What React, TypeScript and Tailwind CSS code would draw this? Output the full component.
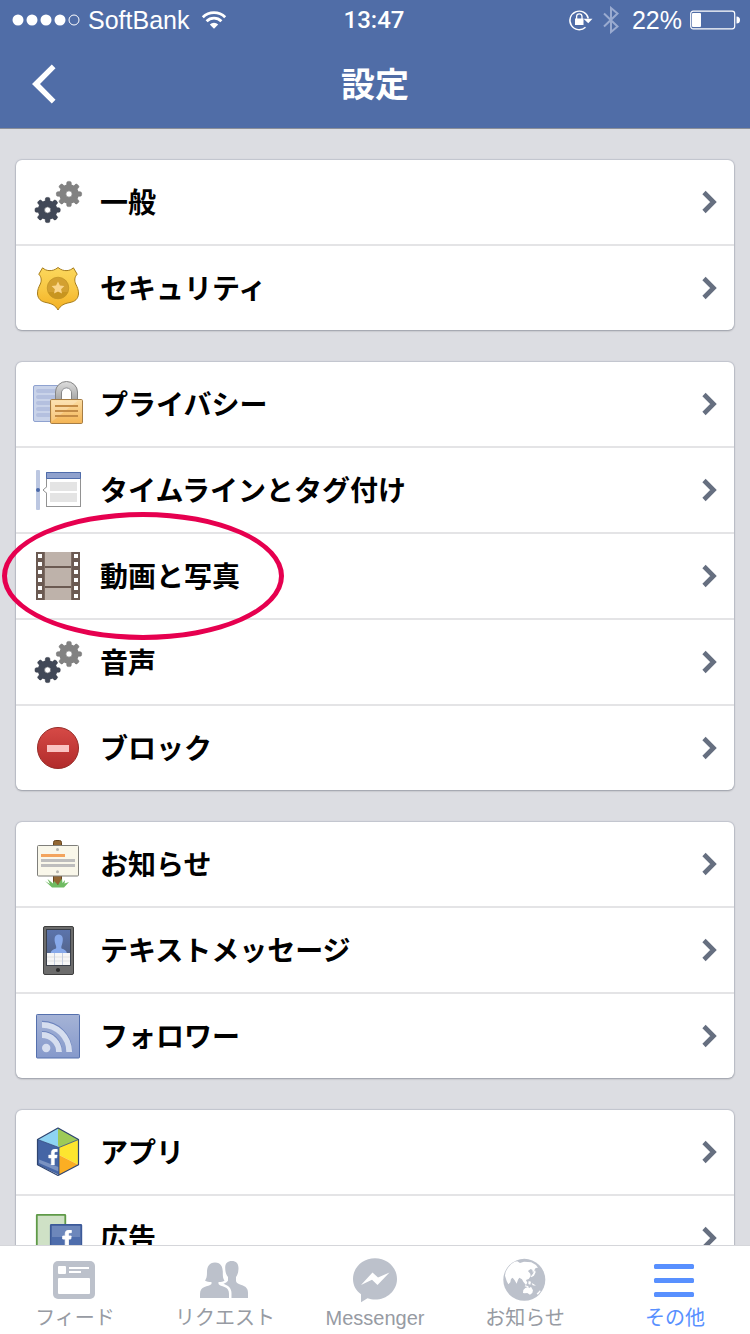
import { FC, ReactNode } from "react";
import { FaFacebookF } from "react-icons/fa";

const Gear: FC<{ x: number; y: number; fill: string; edge: string }> = ({
  x,
  y,
  fill,
  edge,
}) => (
  <g transform={`translate(${x} ${y})`}>
    {[0, 45, 90, 135, 180, 225, 270, 315].map((deg) => (
      <rect
        key={deg}
        x="-2.3"
        y="-12.6"
        width="4.6"
        height="7"
        rx="1.6"
        fill={fill}
        stroke={edge}
        strokeWidth="0.5"
        transform={`rotate(${deg})`}
      />
    ))}
    <circle r="6.5" fill="none" stroke={fill} strokeWidth="6.6" />
    <circle r="3.1" fill="#fff" stroke={edge} strokeWidth="0.6" />
  </g>
);

const GearsIcon = () => (
  <>
    <Gear x={37} y={18} fill="#828282" edge="#6c6c6c" />
    <Gear x={15.6} y={34} fill="#414857" edge="#2e333e" />
  </>
);

const ShieldIcon = () => (
  <>
    <defs>
      <linearGradient id="shieldGold" x1="0" y1="0" x2="0" y2="1">
        <stop offset="0" stopColor="#fbd75c" />
        <stop offset="0.5" stopColor="#f9c844" />
        <stop offset="1" stopColor="#f3b022" />
      </linearGradient>
    </defs>
    <path
      d="M26 5.5C23 8 20 8.8 17 8.6C14.5 8.4 12.5 7.5 10.6 5.8L6.8 12.2C9.5 15 9.8 18.5 8.3 22C6.8 25 5.3 28 5.5 32C6 37 9 39.5 14 40.5C20 41.6 23.5 43.5 26 48C28.5 43.5 32 41.6 38 40.5C43 39.5 46 37 46.500 32C46.700 28 45.200 25 43.700 22C42.200 18.500 42.500 15 45.200 12.200L41.400 5.800C39.500 7.500 37.500 8.400 35 8.600C32 8.800 29 8 26 5.500Z"
      fill="url(#shieldGold)"
      stroke="#a67c1c"
      strokeWidth="1"
    />
    <circle cx="26" cy="26" r="10.800" fill="#d3a030" stroke="#b98d22" strokeWidth="0.6" />
    <path d="M16 30A10.800 10.800 0 0 0 36 30Z" fill="#c8951f" />
    <path
      d="M26 19.500L27.900 23.600L32.400 24.100L29.100 27.200L30 31.600L26 29.400L22 31.600L22.900 27.200L19.600 24.100L24.100 23.600Z"
      fill="#fbd58a"
    />
  </>
);

const PrivacyIcon = () => (
  <>
    <defs>
      <linearGradient id="lockBody" x1="0" y1="0" x2="0" y2="1">
        <stop offset="0" stopColor="#fbdda4" />
        <stop offset="1" stopColor="#f4b453" />
      </linearGradient>
      <linearGradient id="lockRing" x1="0" y1="0" x2="0" y2="1">
        <stop offset="0" stopColor="#dedede" />
        <stop offset="1" stopColor="#a5a5a5" />
      </linearGradient>
    </defs>
    <rect x="1.500" y="7.500" width="34" height="36" rx="1.500" fill="#c9d3e9" stroke="#8fa2d0" />
    {[11, 17, 23, 29, 35].map((y) => (
      <rect key={y} x="4" y={y} width="24" height="4" rx="2" fill="#b4c0df" />
    ))}
    <path
      d="M23.500 22V14A11 10.500 0 0 1 45.500 14V22H39.500V15A5 5 0 0 0 29.500 15V22Z"
      fill="url(#lockRing)"
      stroke="#858585"
    />
    <path d="M30 22V15A4.500 4.500 0 0 1 39 15V22Z" fill="#fff" />
    <rect x="18.500" y="21.500" width="32" height="24" rx="1.200" fill="url(#lockBody)" stroke="#a67d45" />
    <path d="M19.500 44L46 22.500H19.500Z" fill="#fff" opacity="0.2" />
    <path d="M23 28H46M23 33H46M23 38H46" stroke="#c38b45" strokeWidth="1.800" />
  </>
);

const TimelineIcon = () => (
  <>
    <rect x="4" y="6" width="4" height="40" rx="1" fill="#bcc7e1" />
    <circle cx="6" cy="26" r="2" fill="#4a68a8" />
    <rect x="14.500" y="8.500" width="34" height="34" fill="#fff" stroke="#929292" />
    <path d="M15 22.500L11 26L15 29.500" fill="#fff" stroke="#929292" />
    <path d="M14.500 8.500H48.500V14.500H14.500Z" fill="#8fa1cd" stroke="#4f6cab" />
    <rect x="18" y="18" width="27" height="9" fill="#e4e4e4" />
    <rect x="18" y="29" width="27" height="9" fill="#e4e4e4" />
  </>
);

const FilmIcon = () => (
  <>
    <rect x="4" y="2" width="44" height="48" fill="#6b5a52" />
    <rect x="12" y="2" width="28" height="48" fill="#beb2aa" />
    <path d="M12 17H40M12 37H40" stroke="#6b5a52" strokeWidth="2" />
    <path d="M12.500 2V50M39.500 2V50" stroke="#7c6b62" strokeWidth="1" />
    {[4, 12, 20, 28, 36, 44].map((y) => (
      <g key={y} fill="#fff">
        <rect x="6" y={y} width="4" height="4" />
        <rect x="42" y={y} width="4" height="4" />
      </g>
    ))}
  </>
);

const BlockIcon = () => (
  <>
    <defs>
      <linearGradient id="blockRed" x1="0" y1="0" x2="0" y2="1">
        <stop offset="0" stopColor="#d64a46" />
        <stop offset="1" stopColor="#b12b2b" />
      </linearGradient>
    </defs>
    <circle cx="26" cy="26" r="20.500" fill="url(#blockRed)" stroke="#962b27" />
    <rect x="15" y="23" width="22" height="7" fill="#fac3c2" />
  </>
);

const NoticeIcon = () => (
  <>
    <rect x="21.500" y="2.500" width="8" height="44" rx="2" fill="#926733" stroke="#66451f" />
    <path
      d="M20 49.500L13 43L18 46L15.500 41L21 45.500L22 43L26 47L30 40.500L30.500 45L33 42L32.500 45.500L37 44L32 49.500Z"
      fill="#6fbb62"
    />
    <rect x="5.500" y="7.500" width="41" height="30.500" rx="1" fill="#f9f7ea" stroke="#7f7f7b" />
    <circle cx="25.500" cy="11.500" r="1.500" fill="#b5b5b0" />
    <circle cx="25.500" cy="33.800" r="1.500" fill="#b5b5b0" />
    <rect x="9" y="16" width="24" height="3" fill="#f3a45d" />
    <rect x="9" y="21" width="34" height="3" fill="#bdbdbd" />
    <rect x="9" y="26" width="34" height="3" fill="#bdbdbd" />
  </>
);

const PhoneIcon = () => (
  <>
    <defs>
      <linearGradient id="phoneScreen" x1="0" y1="0" x2="0" y2="1">
        <stop offset="0" stopColor="#5b74ac" />
        <stop offset="1" stopColor="#54658c" />
      </linearGradient>
    </defs>
    <rect x="11.500" y="2.500" width="30" height="48" rx="1.500" fill="#6c6c6c" stroke="#3f3f3f" />
    <rect x="14" y="5" width="25" height="37" fill="#3a3f49" />
    <rect x="15" y="6" width="23" height="24" fill="url(#phoneScreen)" />
    <path
      d="M18.500 29.500C19 26.500 21 25.500 24 24.500C24.500 23 24 22 23.500 20.500C21.500 14 23 10.500 26.700 10.500C30.400 10.500 32 14 30 20.500C29.500 22 29 23 29.500 24.500C32.500 25.500 34.500 26.500 35 29.500Z"
      fill="#87a9ea"
    />
    <rect x="15" y="29" width="23" height="12" fill="#f6f6f6" />
    <path d="M15 33H38M15 37H38" stroke="#dedede" strokeWidth="0.800" />
    <path d="M22.500 29V41M30.500 29V41" stroke="#c5cedf" />
    <circle cx="26" cy="46" r="2.100" fill="#2c2c2c" />
  </>
);

const FollowerIcon = () => (
  <>
    <defs>
      <linearGradient id="rssBlue" x1="0" y1="0" x2="0" y2="1">
        <stop offset="0" stopColor="#a5b3d6" />
        <stop offset="1" stopColor="#8599cb" />
      </linearGradient>
    </defs>
    <rect x="4.500" y="4.500" width="43" height="43.500" rx="0.800" fill="url(#rssBlue)" stroke="#5570ad" />
    <path d="M10 14.800A27.200 27.200 0 0 1 37.200 42M10 25A17 17 0 0 1 27 42" fill="none" stroke="#6d84bd" strokeWidth="6" transform="translate(0 -1)" />
    <path d="M10 14.800A27.200 27.200 0 0 1 37.200 42M10 25A17 17 0 0 1 27 42" fill="none" stroke="#d6deef" strokeWidth="5.800" />
    <circle cx="14.200" cy="38" r="4.200" fill="#d6deef" />
  </>
);

const AppsIcon = () => (
  <>
    <path d="M26 2L46.500 13.500L26.500 21L5.500 13.500Z" fill="#8ed4f3" />
    <path d="M26 2L46.500 13.500L27 21.500L26 19Z" fill="#9dca58" />
    <path d="M5.500 13.500L27 21.500V49L5.500 38.800Z" fill="#4565a5" />
    <path d="M7 33.500L26.500 41V45.500L7 37Z" fill="#7a92c2" />
    <path d="M27 21.500L46.500 13.500V38.800L27 29Z" fill="#fde52f" />
    <path d="M27 29L46.500 38.800L27 49Z" fill="#fbae23" />
    <path d="M5.500 13.500L27 21.500L46.500 13.500M27 21.500V49" fill="none" stroke="#2f4a80" strokeWidth="0.800" />
    <path d="M26 2L46.500 13.500V38.800L26 49.500L5.500 38.800V13.500Z" fill="none" stroke="#2f4470" strokeWidth="1.200" strokeLinejoin="round" />
    <FaFacebookF x="13" y="23" width="13" height="21" color="#fff" stroke="#fff" strokeWidth="16" />
  </>
);

const AdsIcon = () => (
  <>
    <rect x="4.800" y="2.800" width="28.500" height="46" rx="0.500" fill="#cfe1c6" stroke="#5f9a48" strokeWidth="1.800" />
    <rect x="18.800" y="12.800" width="30.500" height="36" rx="0.500" fill="#6d87bb" stroke="#3c5a99" strokeWidth="1.800" />
    <rect x="20" y="25" width="28" height="23" fill="#4e6dac" />
    <FaFacebookF x="27" y="18" width="20" height="30" color="#fff" stroke="#fff" strokeWidth="30" />
  </>
);

type Item = { label: string; icon: ReactNode; marked?: boolean };

const groups: Item[][] = [
  [
    { label: "一般", icon: <GearsIcon /> },
    { label: "セキュリティ", icon: <ShieldIcon /> },
  ],
  [
    { label: "プライバシー", icon: <PrivacyIcon /> },
    { label: "タイムラインとタグ付け", icon: <TimelineIcon /> },
    { label: "動画と写真", icon: <FilmIcon />, marked: true },
    { label: "音声", icon: <GearsIcon /> },
    { label: "ブロック", icon: <BlockIcon /> },
  ],
  [
    { label: "お知らせ", icon: <NoticeIcon /> },
    { label: "テキストメッセージ", icon: <PhoneIcon /> },
    { label: "フォロワー", icon: <FollowerIcon /> },
  ],
  [
    { label: "アプリ", icon: <AppsIcon /> },
    { label: "広告", icon: <AdsIcon /> },
  ],
];

const tabs: Item[] = [
  {
    label: "フィード",
    icon: (
      <>
        <rect x="4" y="4" width="42" height="38" rx="5" fill="#bcc1cb" />
        <g fill="#fff">
          <rect x="9" y="9" width="8" height="8" rx="1" />
          <rect x="20" y="10" width="20" height="2" />
          <rect x="20" y="14" width="12" height="2" />
          <rect x="9" y="21" width="32" height="16" rx="1" />
        </g>
      </>
    ),
  },
  {
    label: "リクエスト",
    icon: (
      <g fill="#bcc1cb">
        <path d="M32.800 4C28.500 4 26 6.500 26.200 11C26.300 15 27 17.500 29 20V23.500C28.500 25 26 26 24.500 26.800C29 28.500 32.500 31 32.500 36V41H49V36C49 31 46.500 29.500 42.500 28C38.500 26.500 37 25.500 37 23.500V20C38.500 18 39.500 15 39.500 11C39.500 6.500 37 4 32.800 4Z" />
        <path
          d="M16 5.500C10 5.500 8 10 8 15C8 19.500 7.500 21.500 6 23.500C7.500 24.800 10 25 12.500 25V27C11 28.500 8 29 5.500 30C2.500 31.200 1 33 1 37V41H30V37C30 33 28.500 31.200 25.500 30C23 29 20.500 28.500 19.500 27V25C22 25 24.500 24.800 25.500 23.500C24 21.500 23.800 19.500 23.800 15C23.800 10 22 5.500 16 5.500Z"
          stroke="#fff"
          strokeWidth="2"
          paintOrder="stroke"
        />
      </g>
    ),
  },
  {
    label: "Messenger",
    icon: (
      <>
        <path
          d="M26 1.300C13.800 1.300 4 10.500 4 22C4 28.500 7 33.500 12 37.300V45.200L18.500 41.200C21 42 23.400 42.600 26 42.600C38.200 42.600 48 33.500 48 22C48 10.500 38.200 1.300 26 1.300Z"
          fill="#bcc1cb"
        />
        <path d="M12 28L23.500 15.500L29 20.500L40.500 15.500L28.500 28L23 22.800Z" fill="#fff" />
      </>
    ),
  },
  {
    label: "お知らせ",
    icon: (
      <>
        <circle cx="25.300" cy="22.800" r="21" fill="#bcc1cb" />
        <g transform="translate(1 -2) scale(0.333)" fill="#fff">
          <path d="M15 62L17 50L24 38L33 28L44 20L52 19L60 24L72 20L84 21L94 22L108 30L114 38L107 39L103 46L99 54L97 44L92 42L84 48L91 56L92 64L86 72L78 75L82 83L78 90L70 80L66 73L58 68L54 74L50 86L44 76L38 68L33 72L31 82L25 88L20 78Z" />
          <path d="M99 56L105 44L107 52L102 62L94 67L93 64Z" />
          <path d="M76 91L86 94L84 97L74 94ZM86 78L93 80L91 89L85 87ZM95 84L102 88L108 92L98 91Z" />
          <path d="M70 105L76 99L84 96L89 99L93 95L99 106L97 114L90 119L82 114L74 115L69 114Z" />
          <path d="M110 116L120 106L122 109L114 119Z" />
        </g>
      </>
    ),
  },
  {
    label: "その他",
    icon: (
      <g fill="#5890ff">
        <rect x="5" y="7" width="40" height="5" rx="1.500" />
        <rect x="5" y="21" width="40" height="5" rx="1.500" />
        <rect x="5" y="35" width="40" height="5" rx="1.500" />
      </g>
    ),
  },
];

function StatusBar() {
  return (
    <div className="grid h-10 grid-cols-[1fr_auto_1fr] items-center pr-[10px] pl-3 text-[25px] leading-10">
      <div className="flex items-center gap-2">
        <svg width="68" height="12" viewBox="0 0 68 12">
          {[6, 20, 34, 48].map((cx) => (
            <circle key={cx} cx={cx} cy="6" r="5.500" fill="#fff" />
          ))}
          <circle cx="62" cy="6" r="5" fill="none" stroke="#fff" />
        </svg>
        <span>SoftBank</span>
        <svg className="ml-1" width="26" height="20" viewBox="0 0 26 20">
          <g fill="none" stroke="#fff" strokeWidth="2.800">
            <path d="M1.800 7.200A16 16 0 0 1 24.200 7.200" />
            <path d="M5.600 11.200A10.500 10.500 0 0 1 20.400 11.200" />
          </g>
          <path d="M13 18.800L8.800 14.400A6 6 0 0 1 17.200 14.400Z" fill="#fff" />
        </svg>
      </div>
      <span className="pr-1 font-['Roboto','Liberation_Sans',sans-serif] text-2xl font-medium">
        13:47
      </span>
      <div className="flex items-center justify-end gap-2">
        <svg width="26" height="22" viewBox="0 0 26 22">
          <path d="M17.500 18.300A9.300 9.300 0 1 1 20.300 9.500" fill="none" stroke="#fff" strokeWidth="1.400" />
          <path d="M15.500 9.800H24.500L20.300 14.200Z" fill="#fff" />
          <rect x="7" y="9.500" width="8.500" height="6.500" fill="#fff" />
          <path d="M8.600 10V7.500A2.700 2.700 0 0 1 14 7.500V10" fill="none" stroke="#fff" strokeWidth="1.300" />
        </svg>
        <svg className="mr-1" width="18" height="28" viewBox="0 0 18 28">
          <path
            d="M2 7.500L15.500 20.500L9 26V2L15.500 7.500L2 20.500"
            fill="none"
            stroke="#9aabd0"
            strokeWidth="2"
          />
        </svg>
        <span>22%</span>
        <svg width="50" height="20" viewBox="0 0 50 20">
          <rect x="0.700" y="1.200" width="44" height="17.600" rx="2.500" fill="none" stroke="#fff" strokeWidth="1.200" />
          <rect x="2" y="3" width="9" height="14" rx="1" fill="#fff" />
          <path d="M46.500 6.500A3.500 3.500 0 0 1 46.500 13.500Z" fill="#fff" />
        </svg>
      </div>
    </div>
  );
}

function Row({ item }: { item: Item }) {
  return (
    <li className="relative">
      <a href="#" className="flex h-[84px] items-center gap-4 px-4">
        <svg width="52" height="52" viewBox="0 0 52 52" className="shrink-0">
          {item.icon}
        </svg>
        <span className="flex-1 pt-1 text-[28px] leading-9 font-bold text-black">
          {item.label}
        </span>
        <svg width="16" height="24" viewBox="0 0 16 24">
          <path d="M2 2.500L11.500 12L2 21.500" fill="none" stroke="#666f80" strokeWidth="4.600" />
        </svg>
      </a>
      {item.marked && (
        <div className="pointer-events-none absolute -top-[22px] -left-[14px] z-10 h-32 w-[282px] rounded-[50%] border-5 border-[#e6004f]" />
      )}
    </li>
  );
}

export default function App() {
  return (
    <div className="flex h-screen flex-col bg-[#dcdde2] font-['Liberation_Sans','Noto_Sans_CJK_JP',sans-serif]">
      <header className="border-b border-[#8b8f99] bg-[#506da7] text-white">
        <StatusBar />
        <div className="grid h-[88px] grid-cols-[1fr_auto_1fr] items-center px-8">
          <button type="button" aria-label="戻る" className="w-6">
            <svg width="24" height="40" viewBox="0 0 24 40">
              <path d="M19.800 0.500L23.500 4.200L8 20L23.500 35.800L19.800 39.500L0 20Z" fill="#fff" />
            </svg>
          </button>
          <h1 className="pt-0.5 text-[34px] leading-10 font-bold">設定</h1>
        </div>
      </header>

      <main className="flex min-h-0 flex-1 flex-col gap-8 overflow-y-auto px-4 pt-[31px] [scrollbar-width:none]">
        {groups.map((items, i) => (
          <ul
            key={i}
            className="shrink-0 divide-y-2 divide-[#e4e4e6] rounded-md bg-white shadow-[0_0_1px_1px_rgba(140,145,165,0.3),0_1px_2px_rgba(0,0,0,0.25)]"
          >
            {items.map((item) => (
              <Row key={item.label} item={item} />
            ))}
          </ul>
        ))}
      </main>

      <nav className="grid grid-cols-5 border-t border-[#d5d6da] bg-white pt-[11px] pb-0.5">
        {tabs.map((tab, i) => (
          <a
            key={tab.label}
            href="#"
            className={
              i === tabs.length - 1
                ? "flex flex-col items-center text-[#5890ff]"
                : "flex flex-col items-center text-[#979ba3]"
            }
          >
            <svg width="52" height="46" viewBox="0 0 52 46">
              {tab.icon}
            </svg>
            <span className="pt-px text-xl leading-7">{tab.label}</span>
          </a>
        ))}
      </nav>
    </div>
  );
}
